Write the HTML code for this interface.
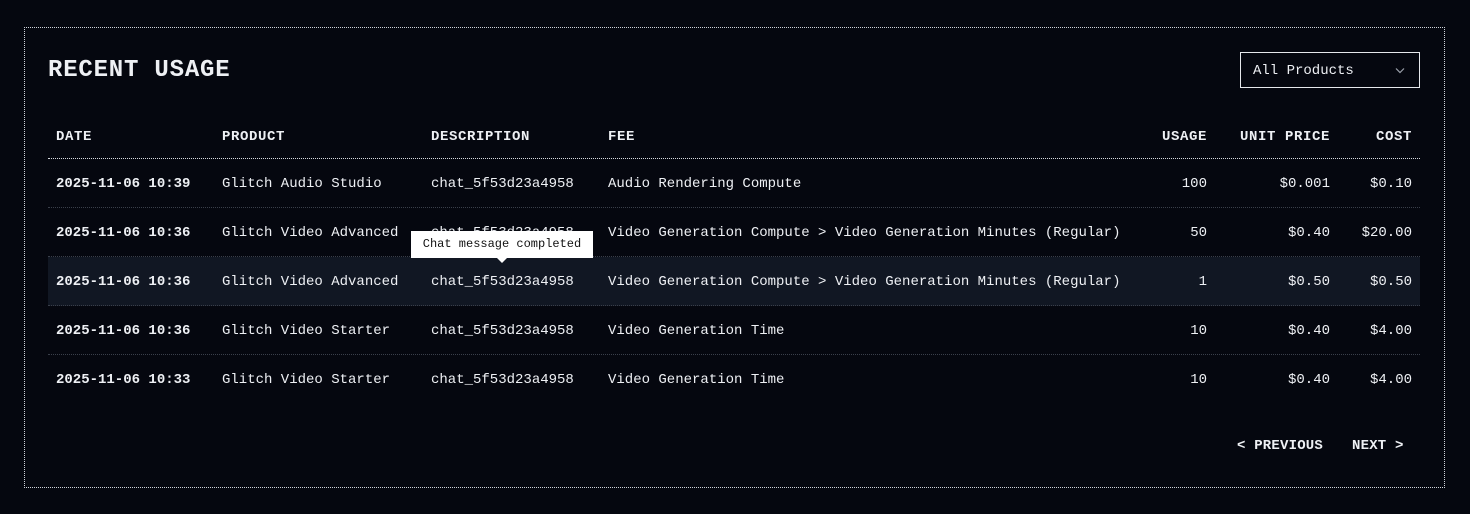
<!DOCTYPE html>
<html><head><meta charset="utf-8"><style>
*{margin:0;padding:0;box-sizing:border-box}
body{width:1470px;height:514px;background:#05070f;color:#eef0f4;font-family:"Liberation Mono",monospace;font-size:14px;position:relative;overflow:hidden}
.box{position:absolute;left:24px;top:27px;width:1421px;height:461px;border:1px dotted #cfd3da}
.a{position:absolute;white-space:nowrap;line-height:16px}
.b{font-weight:bold}
.h{letter-spacing:0.6px}
.r{text-align:right}
h1{position:absolute;left:48px;top:57px;font-size:24px;font-weight:bold;letter-spacing:0.8px;line-height:28px}
.sel{position:absolute;left:1240px;top:52px;width:180px;height:36px;border:1px solid #e6e8ec;padding:11px 12px;line-height:14px}
.sep{position:absolute;left:48px;width:1372px;border-top:1px dotted #3a3f4a}
.hl{position:absolute;left:48px;width:1372px;top:257px;height:49px;background:#111723}
.tip{position:absolute;left:411px;top:231px;width:182px;height:27px;background:#fff;color:#111;font-size:12px;line-height:27px;text-align:center}
.tip:after{content:"";position:absolute;left:86px;top:27px;border:5px solid transparent;border-top-color:#fff;border-bottom:0}
</style></head><body>
<div class="box"></div>
<h1>RECENT USAGE</h1>
<div class="sel">All Products<svg style="position:absolute;right:14px;top:14px" width="10" height="7" viewBox="0 0 10 7"><path d="M1 1.5l4 4 4-4" fill="none" stroke="#9aa0aa" stroke-width="1.2"/></svg></div>
<div class="a b h" style="left:56px;top:129px">DATE</div>
<div class="a b h" style="left:222px;top:129px">PRODUCT</div>
<div class="a b h" style="left:431px;top:129px">DESCRIPTION</div>
<div class="a b h" style="left:608px;top:129px">FEE</div>
<div class="a b h r" style="right:263px;top:129px">USAGE</div>
<div class="a b h r" style="right:140px;top:129px">UNIT PRICE</div>
<div class="a b h r" style="right:58px;top:129px">COST</div>
<div class="sep" style="top:158px;border-top-color:#d8dbe0"></div>
<div class="hl"></div>
<div class="sep" style="top:207px"></div>
<div class="sep" style="top:256px"></div>
<div class="sep" style="top:305px"></div>
<div class="sep" style="top:354px"></div>

<div class="a b" style="left:56px;top:176px">2025-11-06 10:39</div>
<div class="a" style="left:222px;top:176px">Glitch Audio Studio</div>
<div class="a" style="left:431px;top:176px">chat_5f53d23a4958</div>
<div class="a" style="left:608px;top:176px">Audio Rendering Compute</div>
<div class="a r" style="right:263px;top:176px">100</div>
<div class="a r" style="right:140px;top:176px">$0.001</div>
<div class="a r" style="right:58px;top:176px">$0.10</div>

<div class="a b" style="left:56px;top:225px">2025-11-06 10:36</div>
<div class="a" style="left:222px;top:225px">Glitch Video Advanced</div>
<div class="a" style="left:431px;top:225px">chat_5f53d23a4958</div>
<div class="a" style="left:608px;top:225px">Video Generation Compute &gt; Video Generation Minutes (Regular)</div>
<div class="a r" style="right:263px;top:225px">50</div>
<div class="a r" style="right:140px;top:225px">$0.40</div>
<div class="a r" style="right:58px;top:225px">$20.00</div>

<div class="a b" style="left:56px;top:274px">2025-11-06 10:36</div>
<div class="a" style="left:222px;top:274px">Glitch Video Advanced</div>
<div class="a" style="left:431px;top:274px">chat_5f53d23a4958</div>
<div class="a" style="left:608px;top:274px">Video Generation Compute &gt; Video Generation Minutes (Regular)</div>
<div class="a r" style="right:263px;top:274px">1</div>
<div class="a r" style="right:140px;top:274px">$0.50</div>
<div class="a r" style="right:58px;top:274px">$0.50</div>

<div class="a b" style="left:56px;top:323px">2025-11-06 10:36</div>
<div class="a" style="left:222px;top:323px">Glitch Video Starter</div>
<div class="a" style="left:431px;top:323px">chat_5f53d23a4958</div>
<div class="a" style="left:608px;top:323px">Video Generation Time</div>
<div class="a r" style="right:263px;top:323px">10</div>
<div class="a r" style="right:140px;top:323px">$0.40</div>
<div class="a r" style="right:58px;top:323px">$4.00</div>

<div class="a b" style="left:56px;top:372px">2025-11-06 10:33</div>
<div class="a" style="left:222px;top:372px">Glitch Video Starter</div>
<div class="a" style="left:431px;top:372px">chat_5f53d23a4958</div>
<div class="a" style="left:608px;top:372px">Video Generation Time</div>
<div class="a r" style="right:263px;top:372px">10</div>
<div class="a r" style="right:140px;top:372px">$0.40</div>
<div class="a r" style="right:58px;top:372px">$4.00</div>

<div class="tip">Chat message completed</div>

<div class="a b" style="left:1237px;top:438px;letter-spacing:0.2px">&lt; PREVIOUS</div>
<div class="a b" style="left:1352px;top:438px;letter-spacing:0.2px">NEXT &gt;</div>
</body></html>
